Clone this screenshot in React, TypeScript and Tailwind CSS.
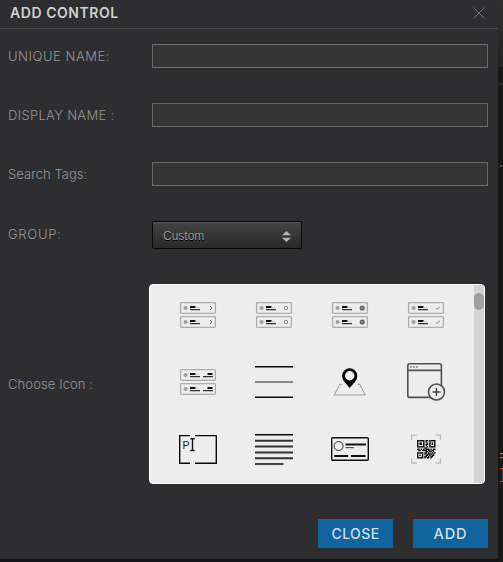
import React from "react";

type RowKind = "chevron" | "ring" | "disc" | "check" | "detail";

function ListIcon({ kind }: { kind: RowKind }) {
  return (
    <svg className="h-[38px] w-[38px]" viewBox="0 0 38 38" fill="none">
      {[6, 20].map((y) => (
        <g key={y} transform={`translate(0 ${y})`}>
          <rect x="1.6" y="0.6" width="34.8" height="10.8" rx="0.8" stroke="#adadad" strokeWidth="1.3" />
          <circle cx="6.6" cy="6" r="2.1" fill="#a0a0a0" />
          <path d="M11 5h5.5" stroke="#111" strokeWidth="2" />
          <path d="M16.5 5.5h3.5" stroke="#ccc" strokeWidth="1" />
          <path d="M11 7.6h10" stroke="#333" strokeWidth="1.2" />
          {kind === "chevron" && <path d="M31 4l2 2-2 2" stroke="#777" strokeWidth="1" />}
          {kind === "ring" && <circle cx="31" cy="6" r="1.7" stroke="#888" strokeWidth="1" />}
          {kind === "disc" && (
            <>
              <circle cx="31.2" cy="6" r="2.6" fill="#666" />
              <path d="M30.2 6h2" stroke="#bbb" strokeWidth="0.9" />
            </>
          )}
          {kind === "check" && <path d="M29 6.4l1.2 1 2.8-2.7" stroke="#777" strokeWidth="0.9" />}
          {kind === "detail" && (
            <>
              <path d="M28.5 5h5" stroke="#111" strokeWidth="2" />
              <path d="M24 7.6h10" stroke="#333" strokeWidth="1.2" />
            </>
          )}
        </g>
      ))}
    </svg>
  );
}

function Glyph({ children }: { children: React.ReactNode }) {
  return (
    <svg className="h-[38px] w-[38px] overflow-visible" viewBox="0 0 38 38" fill="none">
      {children}
    </svg>
  );
}

const QR = [
  "111111011011111",
  "100001010010001",
  "101101001010101",
  "101101011010101",
  "100001010010001",
  "111111001011111",
  "000000110000000",
  "110101011101011",
  "011011110110110",
  "000000011011010",
  "111110110100101",
  "100010101111010",
  "101010011010110",
  "100010110101100",
  "111110101101000",
];

function IconGrid() {
  return (
    <div className="grid grid-cols-[repeat(4,38px)] content-start gap-x-[38px] gap-y-[29px] pt-[11px] pl-[29px]">
      <ListIcon kind="chevron" />
      <ListIcon kind="ring" />
      <ListIcon kind="disc" />
      <ListIcon kind="check" />
      <ListIcon kind="detail" />
      <Glyph>
        <path d="M0 3.7h38M0 34.3h38" stroke="#0a0a0a" strokeWidth="1.5" />
        <path d="M0 19h38" stroke="#888" strokeWidth="2" />
      </Glyph>
      <Glyph>
        <path d="M11 21.3H8.8L3.2 32h31L28.8 21.3h-2.3" stroke="#909090" strokeWidth="0.9" />
        <path
          fillRule="evenodd"
          fill="#050505"
          d="M18.7 5.2a7.6 7.6 0 0 0-7.6 7.6c0 5.3 4.4 7.8 7.6 12.2 3.2-4.4 7.6-6.9 7.6-12.2a7.6 7.6 0 0 0-7.6-7.6Zm0 2.9a4.7 4.7 0 1 1 0 9.4 4.7 4.7 0 0 1 0-9.4Z"
        />
      </Glyph>
      <Glyph>
        <rect x="0.8" y="0.8" width="33.6" height="33.6" rx="2" stroke="#505050" strokeWidth="1.6" />
        <path d="M1 7.4h33" stroke="#555" strokeWidth="1.6" />
        <path d="M3 4h8" stroke="#888" strokeWidth="1.5" strokeDasharray="2 1" />
        <circle cx="29.5" cy="29" r="8" fill="#ededed" stroke="#505050" strokeWidth="1.6" />
        <path d="M25.5 29h8M29.5 25v8" stroke="#444" strokeWidth="1.5" />
      </Glyph>
      <Glyph>
        <path d="M11 5.6H.7v27.7H11M16 5.6h21.300v27.700H16" stroke="#080808" strokeWidth="1.4" />
        <text x="3.5" y="19" fontSize="10.5" fill="#222" className="font-['Liberation_Sans',sans-serif]">P</text>
        <path d="M11.300 8.800h4.400M11.300 20.500h4.400M13.500 8.800v11.700" stroke="#151515" strokeWidth="1.4" />
      </Glyph>
      <Glyph>
        <path d="M0 4.800h38M0 34h28.500" stroke="#080808" strokeWidth="1.6" />
        <path d="M0 10.700h38M0 16.500h38M0 22.400h38M0 28.200h38" stroke="#333" strokeWidth="2" />
      </Glyph>
      <Glyph>
        <rect x="0.7" y="7.7" width="36.6" height="22.6" rx="1" stroke="#111" strokeWidth="1.4" />
        <circle cx="7.6" cy="16" r="4.5" stroke="#333" strokeWidth="1" />
        <path d="M14.500 14.500H35" stroke="#111" strokeWidth="2" />
        <path d="M14.500 17.700H23" stroke="#333" strokeWidth="1" />
        <path d="M3.200 26h14M20 26h14.500" stroke="#111" strokeWidth="1.9" />
      </Glyph>
      <Glyph>
        <path d="M4.700 10V5.200h5M28.500 5.200h5V10M33.500 28.500V33h-5M9.700 33h-5v-4.500" stroke="#bcbcbc" strokeWidth="1.3" />
        {QR.flatMap((line, r) =>
          line.split("").map((bit, c) =>
            bit === "1" ? (
              <rect key={`${r}-${c}`} x={10 + c * 1.22} y={10 + r * 1.22} width="1.4" height="1.4" fill="#050505" />
            ) : null
          )
        )}
      </Glyph>
    </div>
  );
}

function Field({ label, spacing }: { label: string; spacing: string }) {
  return (
    <div className="flex h-6 items-center">
      <span className={`w-36 pt-px whitespace-pre ${spacing}`}>{label}</span>
      <input className="h-6 w-[336px] border border-[#6a6a6a] bg-[#353535] px-2 outline-none" />
    </div>
  );
}

export default function App() {
  return (
    <div className="flex h-[562px] w-[503px] overflow-hidden bg-[#151416] font-['Inter',sans-serif]">
      <main className="flex h-[559px] w-[498px] shrink-0 flex-col bg-[#2e2e30]">
        <header className="flex h-[29px] items-center justify-between border-b border-[#4b4b4c] pr-[13px] pb-[3px] pl-[10px]">
          <h1 className="text-[14px] font-semibold tracking-[0.55px] text-[#d0d0d0]">ADD CONTROL</h1>
          <svg className="h-3 w-3" viewBox="0 0 12 12">
            <path d="M.5.5l11 11m0-11l-11 11" stroke="#777" strokeWidth="1" />
          </svg>
        </header>
        <section className="flex flex-col gap-[35px] pt-[15px] pl-2 text-[13px] font-light text-[#969696]">
          <Field label="UNIQUE NAME:" spacing="tracking-[0.55px]" />
          <Field label="DISPLAY NAME :" spacing="tracking-[0.32px]" />
          <Field label="Search Tags:" spacing="tracking-[0.05px]" />
          <div className="flex h-7 items-center">
            <span className="w-36 tracking-[0.7px]">GROUP:</span>
            <button className="flex h-7 w-[150px] items-center justify-between rounded-[2px] border border-[#080808] bg-linear-to-b from-[#444] to-[#292929] pr-[10px] pl-[10px] font-['Liberation_Sans',sans-serif] text-xs font-normal text-[#999] shadow-[inset_0_1px_0_#555]">
              <span className="pt-px [text-shadow:0_1px_0_#000]">Custom</span>
              <svg className="mt-[3px] h-[11px] w-[9px]" viewBox="0 0 9 11" fill="#b5b5b5">
                <path d="M0 4.300L4.500 0 9 4.300zM0 6.700h9L4.500 11z" />
              </svg>
            </button>
          </div>
          <div className="flex h-[200px] items-center">
            <span className="w-[141px] pt-px tracking-[0.1px]">Choose Icon :</span>
            <div className="flex h-[200px] w-[336px] justify-between overflow-hidden rounded-[4px] border border-white bg-[#ededed]">
              <IconGrid />
              <div className="w-[10px] shrink-0 bg-[#d4d4d4] pt-2">
                <div className="h-[17px] w-[10px] rounded-[5px] bg-[#a0a0a0]" />
              </div>
            </div>
          </div>
        </section>
        <footer className="mt-[35px] flex justify-end gap-5 pr-[10px] text-[14px] font-medium text-[#d3dfe7]">
          <button className="h-[29px] w-[75px] bg-[#10659f] tracking-[0.4px]">CLOSE</button>
          <button className="h-[29px] w-[75px] bg-[#10659f] text-[14.5px] tracking-[0.9px]">ADD</button>
        </footer>
      </main>
      <aside className="flex w-[5px] flex-col bg-[#181818] font-['Liberation_Mono',monospace] text-sm leading-[18px] text-[#b06a5c]">
        <div className="h-[67px] shrink-0 bg-linear-to-b from-[#303030] to-[#242424]" />
        <div className="mt-4 h-[2px] shrink-0 bg-[#292929]" />
        <div className="mt-[80px] ml-[2px] h-[2px] w-[2px] shrink-0 bg-[#555]" />
        <div className="mt-[281px] h-[18px] w-[5px] shrink-0 overflow-hidden pl-px">=</div>
        <div className="h-[18px] w-[5px] shrink-0 overflow-hidden text-[#bd5047]">]</div>
      </aside>
    </div>
  );
}
